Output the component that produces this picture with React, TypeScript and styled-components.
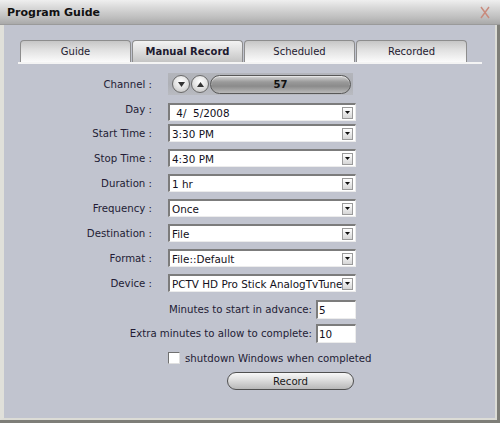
import React from "react";
import styled, { createGlobalStyle } from "styled-components";

const Global = createGlobalStyle`
  html, body { margin: 0; padding: 0; background: #c1c4cf; }
  body { width: 500px; height: 423px; overflow: hidden; font-family: "DejaVu Sans", Verdana, sans-serif; }
  * { box-sizing: border-box; }
`;

const Window = styled.div`
  width: 500px;
  height: 423px;
  display: flex;
  flex-direction: column;
  background: #c1c4cf;
`;

const TitleBar = styled.div`
  height: 25px;
  flex: none;
  display: flex;
  align-items: center;
  justify-content: space-between;
  padding: 0 9px 0 7px;
  background: linear-gradient(#efefef 0%, #dadada 30%, #bdbdbd 75%, #a9a9a9 100%);
  border-bottom: 1px solid #9a9a9a;
`;

const Title = styled.span`
  font-size: 11px;
  font-weight: bold;
  color: #111;
`;

const Frame = styled.div`
  flex: 1;
  display: flex;
  border-right: 3px solid #7e7e78;
  border-bottom: 3px solid #7e7e78;
`;

const Body = styled.div`
  flex: 1;
  border-left: 4px solid #e0e0da;
  border-right: 2px solid #dcdcd6;
  border-bottom: 2px solid #dcdcd6;
  padding: 15px 13px 0 14px;
  display: flex;
  flex-direction: column;
`;

const Tabs = styled.div`
  display: flex;
  padding-left: 2px;
  border-bottom: 2px solid #f4f4f4;
  width: 464px;
`;

const Tab = styled.div<{ $active?: boolean }>`
  width: 111px;
  height: 22px;
  margin-right: 1px;
  border: 1px solid #8d8d8d;
  border-bottom: none;
  border-radius: 4px 4px 0 0;
  display: flex;
  align-items: center;
  justify-content: center;
  font-size: 10px;
  color: #1e1a30;
  font-weight: ${(p) => (p.$active ? "bold" : "normal")};
  background: ${(p) =>
    p.$active
      ? "linear-gradient(#f2f2f2 0%, #e2e2e2 40%, #c4c4c4 100%)"
      : "linear-gradient(#c6c6c6 0%, #e2e2e2 45%, #fbfbfb 100%)"};
`;

const Form = styled.div`
  display: flex;
  flex-direction: column;
`;

const Row = styled.div<{ $mt: number }>`
  display: grid;
  grid-template-columns: 134px 188px;
  column-gap: 16px;
  align-items: center;
  margin-top: ${(p) => p.$mt}px;
`;

const Label = styled.div<{ $up?: number }>`
  text-align: right;
  font-size: 10.2px;
  color: #231c35;
  position: relative;
  top: ${(p) => -(p.$up || 0)}px;
`;

const ChannelBox = styled.div`
  width: 185px;
  height: 22px;
  display: flex;
  align-items: center;
  padding-left: 4px;
  gap: 1px;
  background: linear-gradient(#b3b5bb, #aeb0b6 50%, #b9bbc1);
`;

const RoundBtn = styled.div`
  width: 18px;
  height: 18px;
  border-radius: 50%;
  border: 1px solid #6a6a6a;
  background: radial-gradient(circle at 50% 35%, #ffffff 0%, #e6e6e6 45%, #bdbdbd 100%);
  display: flex;
  align-items: center;
  justify-content: center;
  flex: none;
`;

const Pill = styled.div`
  width: 141px;
  height: 19px;
  border-radius: 10px;
  border: 1px solid #585858;
  background: linear-gradient(#d6d6d6 0%, #9a9a9a 35%, #8b8b8b 60%, #b9b9b9 100%);
  box-shadow: inset 0 1px 1px rgba(255,255,255,0.5);
  display: flex;
  align-items: center;
  justify-content: center;
  font-size: 10px;
  font-weight: bold;
  color: #101010;
`;

const Select = styled.div<{ $pad?: number }>`
  width: 188px;
  height: 18px;
  background: #fff;
  border-top: 2px solid #7c7c7c;
  border-left: 2px solid #7c7c7c;
  border-right: 1px solid #ececec;
  border-bottom: 1px solid #ececec;
  display: flex;
  align-items: center;
  justify-content: space-between;
  padding-left: ${(p) => p.$pad ?? 2}px;
  padding-right: 2px;
  font-size: 10.4px;
  color: #121020;
  white-space: pre;
  overflow: hidden;
`;

const SelectText = styled.span`
  overflow: hidden;
  white-space: pre;
  flex: 1;
`;

const ArrowBtn = styled.div`
  width: 11px;
  height: 12px;
  flex: none;
  border: 1px solid #9a9a9a;
  background: linear-gradient(#ffffff, #d6d6d6);
  display: flex;
  align-items: center;
  justify-content: center;
`;

const InlineRow = styled.div<{ $mt: number }>`
  display: flex;
  justify-content: flex-end;
  align-items: center;
  gap: 4px;
  width: 338px;
  margin-top: ${(p) => p.$mt}px;
`;

const InlineLabel = styled.span`
  font-size: 10.2px;
  color: #231c35;
`;

const NumInput = styled.div`
  width: 40px;
  height: 19px;
  background: #fff;
  border-top: 2px solid #7c7c7c;
  border-left: 2px solid #7c7c7c;
  border-right: 1px solid #ececec;
  border-bottom: 1px solid #ececec;
  font-size: 10.4px;
  color: #121020;
  padding-left: 1px;
  display: flex;
  align-items: center;
`;

const CheckRow = styled.div`
  display: flex;
  align-items: center;
  gap: 5px;
  margin-top: 9px;
  padding-left: 150px;
`;

const CheckBox = styled.div`
  width: 12px;
  height: 12px;
  background: #fff;
  border-top: 1px solid #707070;
  border-left: 1px solid #707070;
  border-right: 1px solid #e0e0e0;
  border-bottom: 1px solid #e0e0e0;
`;

const RecordRow = styled.div`
  display: flex;
  padding-left: 209px;
  margin-top: 8px;
`;

const RecordBtn = styled.div`
  width: 127px;
  height: 18px;
  border-radius: 9px;
  border: 1px solid #505050;
  background: linear-gradient(#f8f8f8 0%, #e0e0e0 40%, #b8b8b8 100%);
  display: flex;
  align-items: center;
  justify-content: center;
  font-size: 10.2px;
  color: #1a1a1a;
`;

const Tri = ({ up }: { up?: boolean }) => (
  <svg width="7" height="5" viewBox="0 0 7 5">
    <polygon points={up ? "0,5 7,5 3.5,0" : "0,0 7,0 3.5,5"} fill="#333" />
  </svg>
);

const Arrow = () => (
  <ArrowBtn>
    <svg width="5" height="3" viewBox="0 0 5 3">
      <polygon points="0,0 5,0 2.5,3" fill="#111" />
    </svg>
  </ArrowBtn>
);

const CloseX = () => (
  <svg width="12" height="13" viewBox="0 0 12 13">
    <path d="M2 1 L10 12 M10 1 L2 12" stroke="#c98a7c" strokeWidth="1.4" fill="none" />
  </svg>
);

const fields: { label: string; value: string; pad?: number; mt: number; up?: number }[] = [
  { label: "Day :", value: " 4/  5/2008", pad: 3, mt: 8, up: 3 },
  { label: "Start Time :", value: "3:30 PM", mt: 3 },
  { label: "Stop Time :", value: "4:30 PM", mt: 7 },
  { label: "Duration :", value: "1 hr", mt: 7 },
  { label: "Frequency :", value: "Once", mt: 7 },
  { label: "Destination :", value: "File", mt: 7 },
  { label: "Format :", value: "File::Default", mt: 7 },
  { label: "Device :", value: "PCTV HD Pro Stick AnalogTvTuner", mt: 7 },
];

export default function App() {
  return (
    <Window>
      <Global />
      <TitleBar>
        <Title>Program Guide</Title>
        <CloseX />
      </TitleBar>
      <Frame>
        <Body>
          <Tabs>
            <Tab>Guide</Tab>
            <Tab $active>Manual Record</Tab>
            <Tab>Scheduled</Tab>
            <Tab>Recorded</Tab>
          </Tabs>
          <Form>
            <Row $mt={9}>
              <Label>Channel :</Label>
              <ChannelBox>
                <RoundBtn><Tri /></RoundBtn>
                <RoundBtn><Tri up /></RoundBtn>
                <Pill>57</Pill>
              </ChannelBox>
            </Row>
            {fields.map((f) => (
              <Row key={f.label} $mt={f.mt}>
                <Label $up={f.up}>{f.label}</Label>
                <Select $pad={f.pad}>
                  <SelectText>{f.value}</SelectText>
                  <Arrow />
                </Select>
              </Row>
            ))}
            <InlineRow $mt={8}>
              <InlineLabel>Minutes to start in advance:</InlineLabel>
              <NumInput>5</NumInput>
            </InlineRow>
            <InlineRow $mt={5}>
              <InlineLabel>Extra minutes to allow to complete:</InlineLabel>
              <NumInput>10</NumInput>
            </InlineRow>
            <CheckRow>
              <CheckBox />
              <InlineLabel>shutdown Windows when completed</InlineLabel>
            </CheckRow>
            <RecordRow>
              <RecordBtn>Record</RecordBtn>
            </RecordRow>
          </Form>
        </Body>
      </Frame>
    </Window>
  );
}
